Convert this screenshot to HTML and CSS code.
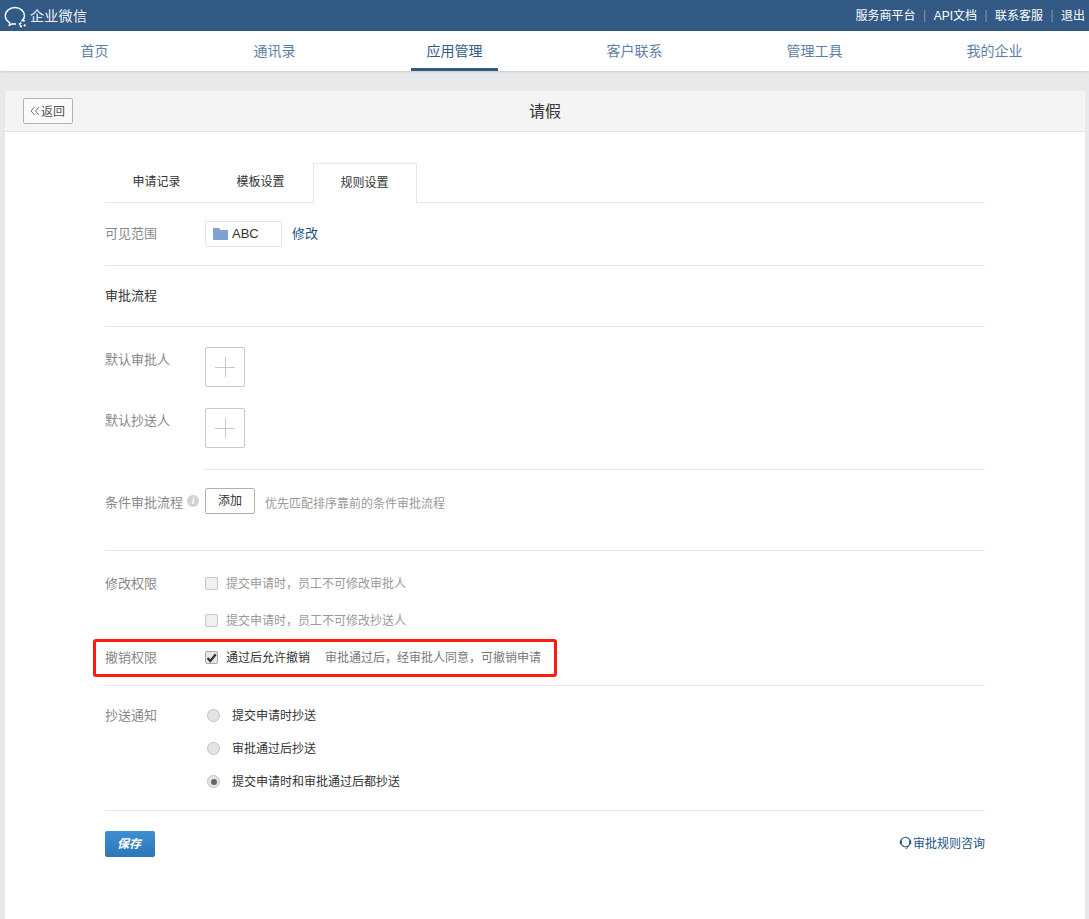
FILE: index.html
```html
<!DOCTYPE html>
<html lang="zh">
<head>
<meta charset="utf-8">
<title>企业微信</title>
<link rel="stylesheet" href="styles.css">
</head>
<body>
<header class="topbar">
  <div class="brand">
    <svg class="brand-logo" width="24" height="22" viewBox="0 0 24 22" fill="none" stroke="#fff" stroke-width="1.500"><path d="M17.500 15.500C19.300 14 20.500 12 20.500 9.800 20.500 5.200 16 1.500 11 1.500S1.300 5.200 1.300 9.800c0 2.900 1.700 5.300 4.400 6.800l-.3 2.700 3.100-1.600c1.100.3 2.200.4 3.500.4"/><path d="M15 18.500l2.200-1.700M19 13.500l1.500 2M21.500 18.500L20 20.300M16 19.500l1.700 1.500" stroke-width="1.700"/></svg>
    <span class="brand-name">企业微信</span>
  </div>
  <nav class="toplinks">
    <a>服务商平台</a><i class="sep">|</i><a>API文档</a><i class="sep">|</i><a>联系客服</a><i class="sep">|</i><a>退出</a>
  </nav>
</header>
<nav class="mainnav">
  <a class="navitem"><em>首页</em></a>
  <a class="navitem"><em>通讯录</em></a>
  <a class="navitem active"><span>应用管理</span></a>
  <a class="navitem"><em>客户联系</em></a>
  <a class="navitem"><em>管理工具</em></a>
  <a class="navitem"><em>我的企业</em></a>
</nav>
<main class="card">
  <div class="cardhead">
    <a class="backbtn"><svg width="10" height="10" viewBox="0 0 10 10" fill="none" stroke="#777" stroke-width="1"><path d="M4.500 1L1 5l3.500 4M9 1L5.500 5 9 9"/></svg><span class="shift">返回</span></a>
    <h1 class="cardtitle">请假</h1>
  </div>
  <div class="content">
    <div class="tabs">
      <a class="tab">申请记录</a>
      <a class="tab">模板设置</a>
      <a class="tab current">规则设置</a>
    </div>
    <section class="row-visible line">
      <div class="label">可见范围</div>
      <div class="chip"><svg width="15" height="12" viewBox="0 0 15 12"><path fill="#7ea3d0" d="M0 0h6l1.500 2H15v10H0z"/></svg><span class="shift">ABC</span></div>
      <a class="link">修改</a>
    </section>
    <section class="row-title line">审批流程</section>
    <section class="flow">
      <div class="flow-row">
        <div class="label">默认审批人</div>
        <div class="addbox"><svg width="20" height="20" viewBox="0 0 20 20" stroke="#c8c8c8"><path d="M0 10.500h20M10.500 0v20"/></svg></div>
      </div>
      <div class="flow-row">
        <div class="label">默认抄送人</div>
        <div class="addbox"><svg width="20" height="20" viewBox="0 0 20 20" stroke="#c8c8c8"><path d="M0 10.500h20M10.500 0v20"/></svg></div>
      </div>
      <div class="flow-sep"></div>
      <div class="cond">
        <div class="label">条件审批流程<span class="info">i</span></div>
        <a class="btn">添加</a>
        <span class="hint">优先匹配排序靠前的条件审批流程</span>
      </div>
    </section>
    <section class="perm line">
      <div class="opt-row">
        <div class="label">修改权限</div>
        <span class="check"></span><span class="hint">提交申请时&#65292;员工不可修改审批人</span>
      </div>
      <div class="opt-row">
        <div class="label"></div>
        <span class="check"></span><span class="hint">提交申请时&#65292;员工不可修改抄送人</span>
      </div>
      <div class="opt-row marked">
        <div class="label">撤销权限</div>
        <span class="check on"><svg width="11" height="10" viewBox="0 0 11 10" fill="none" stroke="#333" stroke-width="2.200"><path d="M1.500 5l2.800 3L9.800 1.200"/></svg></span><span class="opt-text">通过后允许撤销</span><span class="hint after">审批通过后&#65292;经审批人同意&#65292;可撤销申请</span>
      </div>
    </section>
    <section class="notify line">
      <div class="radio-row">
        <div class="label">抄送通知</div>
        <span class="radio"></span><span class="opt-text">提交申请时抄送</span>
      </div>
      <div class="radio-row">
        <div class="label"></div>
        <span class="radio"></span><span class="opt-text">审批通过后抄送</span>
      </div>
      <div class="radio-row">
        <div class="label"></div>
        <span class="radio on"></span><span class="opt-text">提交申请时和审批通过后都抄送</span>
      </div>
    </section>
    <footer class="actions">
      <a class="save">保存</a>
      <a class="consult"><svg width="13" height="14" viewBox="0 0 13 14" fill="none" stroke="#1c5283" stroke-width="1.100"><circle cx="6.500" cy="6" r="4.800"/><path d="M9.500 10.500C9 11.700 8 12.300 6.500 12.500" stroke-width="1"/><path d="M.8 4.500h2v3.500h-2zM10.200 4.500h2v3.500h-2z" fill="#1c5283" stroke="none"/></svg><span class="shift">审批规则咨询</span></a>
    </footer>
  </div>
</main>
</body>
</html>
```
FILE: styles.css
```css
*, *::before, *::after { box-sizing: border-box; }
html, body { height: 100%; }
body {
  margin: 0;
  background: #e8e9eb;
  font-family: "Liberation Sans", "Noto Sans CJK SC", sans-serif;
  font-size: 12px;
  color: #333;
  overflow: hidden;
}
a { text-decoration: none; }

.topbar {
  height: 31px;
  background: #335a85;
  color: #fff;
  display: flex;
  align-items: center;
  justify-content: space-between;
  padding: 0 4px 0 4px;
}
.brand { display: flex; align-items: center; gap: 2px; font-size: 14px; color: #eef2f6; }
.brand-logo { display: block; margin-top: 3px; }
.brand-name { letter-spacing: .3px; margin-bottom: 1px; }
.toplinks { display: flex; align-items: center; font-size: 12px; color: #fff; margin-bottom: 2px; }
.sep { font-style: normal; color: #7f98b3; width: 18px; text-align: center; }

.mainnav {
  height: 40px;
  background: #fff;
  display: grid;
  grid-template-columns: repeat(6, 180px);
  padding-left: 5px;
  box-shadow: 0 1px 2px rgba(0, 0, 0, .12);
  position: relative;
}
.navitem {
  display: flex;
  justify-content: center;
  align-items: center;
  height: 40px;
  font-size: 14px;
  color: #5d7fa6;
}
.navitem em { font-style: normal; margin-bottom: 2px; margin-right: 1px; }
.navitem.active { color: #335a85; }
.navitem.active span {
  width: 87px;
  margin-right: 1px;
  height: 40px;
  line-height: 40px;
  text-align: center;
  border-bottom: 3px solid #335a85;
}

.card {
  width: 1080px;
  height: 900px;
  margin: 20px 0 0 5px;
  background: #fff;
  border-radius: 3px 3px 0 0;
}
.cardhead {
  height: 41px;
  background: #f4f4f4;
  border-bottom: 1px solid #e4e4e4;
  display: flex;
  align-items: center;
  padding-left: 18px;
  position: relative;
}
.backbtn {
  width: 50px;
  height: 26px;
  border: 1px solid #b0b0b0;
  border-radius: 2px;
  background: #fafafa;
  color: #555;
  display: flex;
  align-items: center;
  justify-content: center;
  gap: 1px;
  padding-right: 1px;
  font-size: 12px;
}
.shift { margin-bottom: 2px; }
.cardtitle {
  flex: 1;
  margin: 0 68px 3px 0;
  text-align: center;
  font-size: 16px;
  font-weight: normal;
  color: #333;
}

.content { width: 880px; margin-left: 100px; padding-top: 31px; }
.line { border-bottom: 1px solid #e6e6e6; }
.label { width: 100px; flex: none; font-size: 13px; color: #888; margin-bottom: 2px; }

.tabs { display: flex; height: 40px; border-bottom: 1px solid #e6e6e6; }
.tab {
  width: 104px;
  height: 40px;
  line-height: 38px;
  padding-right: 1px;
  text-align: center;
  font-size: 12px;
  color: #333;
}
.tab.current {
  background: #fff;
  border: 1px solid #e6e6e6;
  border-bottom: 0;
}

.row-visible { height: 63px; display: flex; align-items: center; }
.row-visible .label { margin-bottom: 4px; }
.chip {
  width: 77px;
  height: 26px;
  border: 1px solid #e4e4e4;
  border-radius: 2px;
  display: flex;
  align-items: center;
  gap: 4px;
  padding-left: 7px;
  font-size: 13px;
  color: #333;
}
.link { margin: 0 0 4px 10px; font-size: 13px; color: #1c5283; }
.row-title { height: 61px; line-height: 59px; font-size: 13px; color: #333; }

.flow { height: 224px; padding-top: 20px; border-bottom: 1px solid #e6e6e6; }
.flow-row { display: flex; height: 40px; margin-bottom: 21px; }
.flow-row .label { padding-top: 2px; }
.addbox {
  width: 40px;
  height: 40px;
  border: 1px solid #c8c8c8;
  border-radius: 2px;
  display: flex;
  align-items: center;
  justify-content: center;
}
.flow-sep { margin: 0 0 18px 100px; height: 1px; background: #e6e6e6; }
.cond { display: flex; align-items: center; height: 26px; }
.cond .label { display: flex; align-items: center; white-space: nowrap; margin-bottom: 0; }
.info {
  width: 12px;
  height: 12px;
  margin-left: 4px;
  border-radius: 50%;
  background: #d2d2d2;
  color: #fff;
  font-size: 9px;
  font-style: italic;
  font-weight: bold;
  line-height: 12px;
  text-align: center;
}
.btn {
  width: 50px;
  height: 26px;
  line-height: 24px;
  text-align: center;
  border: 1px solid #b0b0b0;
  border-radius: 2px;
  color: #333;
  font-size: 12px;
}
.hint { color: #999; font-size: 12px; margin-bottom: 2px; }
.cond .hint { margin: 2px 0 0 10px; }

.perm { height: 135px; padding-top: 14px; }
.opt-row { display: flex; align-items: center; height: 37px; }
.marked { position: relative; }
.marked::after {
  content: "";
  position: absolute;
  left: -12px;
  top: 0;
  width: 464px;
  height: 38px;
  border: 3px solid #ff1a10;
  border-radius: 3px;
}
.check {
  width: 13px;
  height: 13px;
  border: 1px solid #c6c6c6;
  border-radius: 2px;
  background: #f0f0f0;
  margin-right: 8px;
  flex: none;
  display: flex;
  align-items: center;
  justify-content: center;
}
.check.on { background: #e6e6e6; border-color: #aaa; }
.opt-text { font-size: 12px; color: #333; margin-bottom: 2px; }
.hint.after { margin-left: 15px; color: #777; }

.notify { height: 125px; padding-top: 13px; }
.radio-row { display: flex; align-items: center; height: 33px; }
.radio {
  width: 13px;
  height: 13px;
  border-radius: 50%;
  border: 1px solid #c2c2c2;
  background: #e4e4e4;
  margin: 0 12px 0 2px;
  flex: none;
  display: flex;
  align-items: center;
  justify-content: center;
}
.radio.on::before {
  content: "";
  width: 6px;
  height: 6px;
  border-radius: 50%;
  background: #666;
}

.actions {
  display: flex;
  justify-content: space-between;
  align-items: center;
  padding-top: 20px;
}
.save {
  width: 50px;
  height: 26px;
  line-height: 26px;
  padding-right: 2px;
  text-align: center;
  border-radius: 2px;
  background: linear-gradient(#3f8ed0, #2d76b8);
  color: #fff;
  font-size: 12px;
  font-weight: bold;
  font-style: italic;
}
.consult {
  display: flex;
  align-items: center;
  gap: 1px;
  font-size: 12px;
  color: #1c5283;
  margin-bottom: 2px;
}
```
